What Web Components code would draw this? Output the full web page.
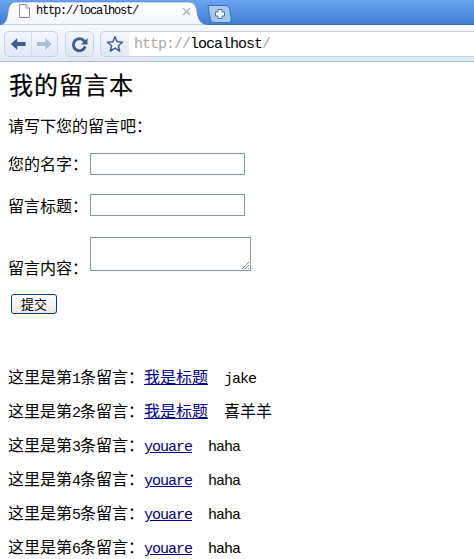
<!DOCTYPE html>
<html>
<head>
<meta charset="utf-8">
<style>
  html, body { margin: 0; padding: 0; background: #fff; }
  body { width: 474px; height: 559px; overflow: hidden; }
</style>
</head>
<body>
<browser-bar url-scheme="http://" url-host="localhost" url-rest="/"></browser-bar>
<guest-book>
  <form-row label="您的名字：" drop="-3"><input-box></input-box></form-row>
  <form-row label="留言标题：" drop="-2"><input-box></input-box></form-row>
  <form-row label="留言内容：" drop="5"><input-box multiline></input-box></form-row>
</guest-book>
<message-list></message-list>

<script>
class BrowserBar extends HTMLElement {
  constructor() {
    super();
    this.attachShadow({ mode: 'open' });
  }

  connectedCallback() {
    const scheme = this.getAttribute('url-scheme');
    const host = this.getAttribute('url-host');
    const rest = this.getAttribute('url-rest');
    this.shadowRoot.innerHTML = `
      <style>
        :host { display: block; height: 63px; font-family: "Liberation Mono", monospace; }
        .strip {
          height: 24px;
          display: flex;
          background: linear-gradient(#69a3ee, #3f80d4);
          border-bottom: 1px solid #3d6da6;
        }
        .tab { display: grid; width: 208px; height: 25px; flex: none; }
        .tab > * { grid-area: 1 / 1; }
        .tab-inner { display: flex; align-items: center; padding: 0 17px 3px 18px; }
        .page-icon { margin-right: 5px; }
        .title { flex: 1; font-size: 12px; letter-spacing: -1.2px; color: #000; }
        .new-tab { margin: 5px 0 0 -1px; }
        .toolbar {
          height: 37px;
          box-sizing: border-box;
          padding: 6px 0 0 4px;
          display: flex;
          background: linear-gradient(#f5f8fd 0, #eef3fb 60%, #dde8f7 100%);
          border-bottom: 1px solid #b9c1cd;
        }
        .group {
          height: 26px;
          box-sizing: border-box;
          display: flex;
          align-items: center;
          background: linear-gradient(#f3f6fc, #dfe7f5);
          border: 1px solid #c9d3e6;
          border-radius: 5px;
        }
        .nav { width: 54px; margin-right: 7px; }
        .nav svg:first-child { border-right: 1px solid #d3dcec; }
        .reload { width: 29px; margin-right: 6px; justify-content: center; }
        .star { width: 29px; justify-content: center; border-radius: 5px 0 0 5px; border-right: 0; }
        .url {
          flex: 1;
          height: 26px;
          box-sizing: border-box;
          background: #fff;
          border-top: 1px solid #c9d0e0;
          border-bottom: 1px solid #c3d3e8;
          padding-left: 5px;
          font-size: 15px;
          letter-spacing: -1px;
          line-height: 25px;
          color: #000;
          white-space: nowrap;
        }
        .url span { color: #a8a8a8; }
      </style>
      <div class="strip">
        <div class="tab">
          <svg width="208" height="25" viewBox="0 0 208 25">
            <defs>
              <linearGradient id="tabfill" x1="0" y1="0" x2="0" y2="1">
                <stop offset="0" stop-color="#ffffff"/>
                <stop offset="1" stop-color="#f3f6fc"/>
              </linearGradient>
            </defs>
            <path d="M0 25C6 24 7 19 8 12C9 5 11 2 17 2H188C194 2 196 5 197 12C198 19 200 24 208 25Z" fill="url(#tabfill)" stroke="#4c7fbf" stroke-width="0.6"/>
          </svg>
          <div class="tab-inner">
            <svg class="page-icon" width="13" height="16" viewBox="0 0 13 16">
              <path d="M1.5 1.5H8L11.5 5V14.5H1.5Z" fill="#fff" stroke="#8c8c8c"/>
              <path d="M8 1.5V5H11.5" fill="#eee" stroke="#a0a0a0"/>
            </svg>
            <span class="title">http://localhost/</span>
            <svg width="9" height="9" viewBox="0 0 9 9">
              <path d="M1 1L8 8M8 1L1 8" stroke="#b4b8bf" stroke-width="1.7"/>
            </svg>
          </div>
        </div>
        <svg class="new-tab" width="26" height="18" viewBox="0 0 26 18">
          <path d="M1 .5H19C21 .5 22 2 23 6L24 12C24.500 15 24 17.500 22 17.500H7C4 17.500 3.500 15 3 12Z" fill="#a8c7ef" stroke="#3f70ad"/>
          <path d="M11 4.500H15V7H17.500V11H15V13.500H11V11H8.500V7H11Z" fill="#f4f8fe" stroke="#4c74a8"/>
        </svg>
      </div>
      <div class="toolbar">
        <div class="group nav">
          <svg width="27" height="24" viewBox="0 0 27 24">
            <path d="M6 12L12.500 6V10H21V14H12.500V18Z" fill="#3f5f92"/>
          </svg>
          <svg width="25" height="24" viewBox="0 0 25 24">
            <path d="M20 12L13.500 6V10H5V14H13.500V18Z" fill="#aabddb"/>
          </svg>
        </div>
        <div class="group reload">
          <svg width="19" height="19" viewBox="0 0 19 19">
            <path d="M15 7.500A6 6 0 1 0 15.200 11.500" fill="none" stroke="#3f5f92" stroke-width="2.800"/>
            <path d="M17.500 3V9.500H11Z" fill="#3f5f92"/>
          </svg>
        </div>
        <div class="group star">
          <svg width="18" height="18" viewBox="0 0 18 18">
            <path d="M9 1.800L11.100 6.800L16.500 7.200L12.400 10.700L13.700 16L9 13.200L4.300 16L5.600 10.700L1.500 7.200L6.900 6.800Z" fill="#eef3fb" stroke="#3f5f92" stroke-width="1.500" stroke-linejoin="round"/>
          </svg>
        </div>
        <div class="url"><span>${scheme}</span>${host}<span>${rest}</span></div>
      </div>
    `;
  }
}

class InputBox extends HTMLElement {
  constructor() {
    super();
    this.attachShadow({ mode: 'open' });
  }

  connectedCallback() {
    const multi = this.hasAttribute('multiline');
    this.shadowRoot.innerHTML = `
      <style>
        :host {
          display: inline-grid;
          box-sizing: border-box;
          width: ${multi ? 161 : 155}px;
          height: ${multi ? 34 : 22}px;
          border: 1px solid #7f98ad;
          background: #fff;
          flex: none;
        }
        svg { place-self: end; }
      </style>
      ${multi ? `<svg width="9" height="9" viewBox="0 0 9 9">
        <path d="M1 8L8 1M4 8L8 4M7 8L8 7" stroke="#8a8a8a" fill="none"/>
      </svg>` : ''}
    `;
  }
}

class FormRow extends HTMLElement {
  constructor() {
    super();
    this.attachShadow({ mode: 'open' });
  }

  connectedCallback() {
    const label = this.getAttribute('label');
    const drop = Number(this.getAttribute('drop') || 0);
    this.shadowRoot.innerHTML = `
      <style>
        :host { display: flex; align-items: flex-end; }
        .label { width: 82px; font-size: 16px; line-height: 18px; flex: none; margin-bottom: ${-drop}px; }
      </style>
      <span class="label">${label}</span>
      <slot></slot>
    `;
  }
}

class GuestBook extends HTMLElement {
  constructor() {
    super();
    this.attachShadow({ mode: 'open' });
  }

  connectedCallback() {
    this.shadowRoot.innerHTML = `
      <style>
        :host {
          display: block;
          padding: 7px 0 0 8px;
          font-family: "Noto Sans CJK SC", sans-serif;
          color: #000;
        }
        h1 { margin: 0 0 18px 1px; font-size: 24px; line-height: 28px; font-weight: 400; letter-spacing: 1px; -webkit-text-stroke: 0.2px #000; }
        p { margin: 0 0 19px; font-size: 16px; line-height: 18px; }
        .fields { display: flex; flex-direction: column; gap: 19px; }
        ::slotted(form-row:last-child) { margin-top: 2px; }
        .submit {
          display: block;
          box-sizing: border-box;
          margin: 23px 0 0 3px;
          width: 46px;
          height: 20px;
          padding: 0;
          font: 13px/16px "Noto Sans CJK SC", sans-serif;
          color: #000;
          background: linear-gradient(#fff, #ece9df);
          border: 1px solid #003c74;
          border-radius: 3px;
        }
      </style>
      <h1>我的留言本</h1>
      <p>请写下您的留言吧：</p>
      <div class="fields"><slot></slot></div>
      <button class="submit">提交</button>
    `;
  }
}

class MessageRow extends HTMLElement {
  constructor() {
    super();
    this.attachShadow({ mode: 'open' });
  }

  // latin parts are set apart so they get the 8px advance of the reference
  latin(text) {
    return text.replace(/[A-Za-z0-9]+/g, m => `<span class="latin">${m}</span>`);
  }

  connectedCallback() {
    const n = this.getAttribute('number');
    const title = this.getAttribute('title');
    const author = this.getAttribute('author');
    this.shadowRoot.innerHTML = `
      <style>
        :host { display: flex; height: 18px; font-size: 16px; line-height: 18px; white-space: nowrap; }
        .latin { font-family: "Liberation Mono", monospace; font-size: 15px; letter-spacing: -1px; }
        a { color: #00008b; text-decoration: underline; }
        .author { margin-left: 16px; }
      </style>
      <span>这里是第${this.latin(n)}条留言：</span>
      <a href="#">${this.latin(title)}</a>
      <span class="author">${this.latin(author)}</span>
    `;
  }
}

class MessageList extends HTMLElement {
  constructor() {
    super();
    this.attachShadow({ mode: 'open' });
  }

  connectedCallback() {
    const rows = [
      ['我是标题', 'jake'],
      ['我是标题', '喜羊羊'],
      ['youare', 'haha'],
      ['youare', 'haha'],
      ['youare', 'haha'],
      ['youare', 'haha']
    ];
    this.shadowRoot.innerHTML = `
      <style>
        :host {
          display: flex;
          flex-direction: column;
          gap: 16px;
          padding: 53px 0 0 8px;
          font-family: "Noto Sans CJK SC", sans-serif;
          color: #000;
        }
      </style>
      ${rows.map((r, i) => `<message-row number="${i + 1}" title="${r[0]}" author="${r[1]}"></message-row>`).join('')}
    `;
  }
}

customElements.define('browser-bar', BrowserBar);
customElements.define('input-box', InputBox);
customElements.define('form-row', FormRow);
customElements.define('guest-book', GuestBook);
customElements.define('message-row', MessageRow);
customElements.define('message-list', MessageList);
</script>
</body>
</html>
